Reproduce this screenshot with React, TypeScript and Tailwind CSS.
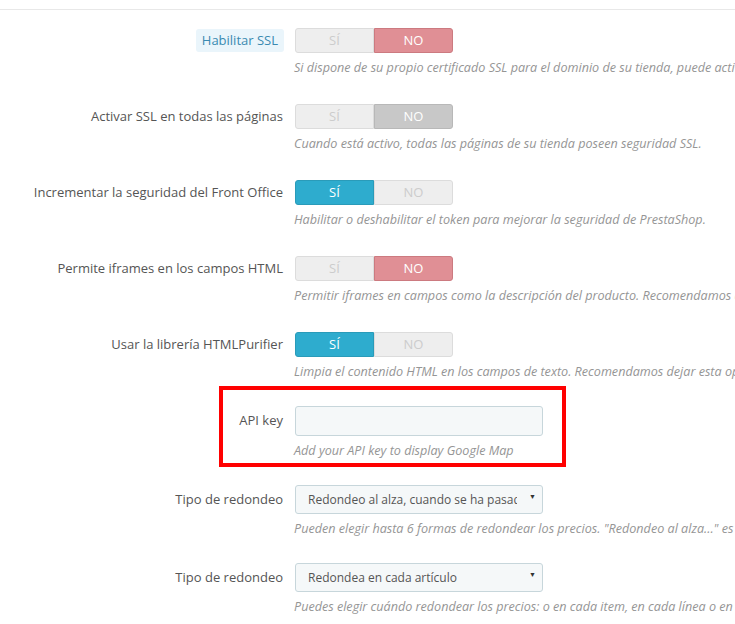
import type { ReactNode } from "react";

type SwitchState = "no" | "si" | "noGrey";

interface RowProps {
  label: ReactNode;
  help: string;
  children: ReactNode;
  className?: string;
  controlHeight: string;
}

function Row({ label, help, children, className = "", controlHeight }: RowProps) {
  return (
    <div className={`relative flex items-start ${className}`}>
      <div className={`w-[284px] shrink-0 flex items-center justify-end ${controlHeight}`}>{label}</div>
      <div className="ml-[11px] flex flex-col">
        {children}
        <p className="mt-[7px] -ml-[1px] whitespace-nowrap text-[12.6px] leading-[16px] italic text-[#959595]">{help}</p>
      </div>
    </div>
  );
}

function Switch({ value }: { value: SwitchState }) {
  const off = "bg-[#eeeeee] text-[#cccccc] border-[#dcdcdc]";
  let siCls = off;
  let noCls = off;
  if (value === "si") siCls = "bg-[#2eacce] text-white border-[#2a9bb9]";
  if (value === "no") noCls = "bg-[#e08f95] text-white border-[#cc7a80]";
  if (value === "noGrey") noCls = "bg-[#c8c8c8] text-white border-[#b8b8b8]";
  return (
    <div className="flex h-[25px] w-[158px]">
      <div className={`flex-1 flex items-center justify-center border rounded-l-[3px] text-[13px] ${siCls}`}>SÍ</div>
      <div className={`flex-1 flex items-center justify-center border rounded-r-[3px] text-[13px] ${noCls}`}>NO</div>
    </div>
  );
}

function Label({ children }: { children: ReactNode }) {
  return <span className="text-[13px] text-[#555555] pr-[1px]">{children}</span>;
}

function Select({ value }: { value: string }) {
  return (
    <div className="flex items-center h-[29px] w-[248px] bg-[#f5f8f9] border border-[#c7d6db] rounded-[3px] pl-[12px] pr-[3px]">
      <span className="flex-1 overflow-hidden whitespace-nowrap text-[12px] text-[#555555] mr-[12px]">{value}</span>
      <span className="text-[7px] text-[#333333] -mt-[5px] w-[10px]">▼</span>
    </div>
  );
}

export default function App() {
  return (
    <div className="w-[735px] h-[624px] overflow-hidden bg-white" style={{ fontFamily: '"Open Sans", "Liberation Sans", sans-serif' }}>
      <div className="mt-[9px] border-t border-[#e8e8e8]" />

      {/* ================= SWITCHES ================= */}
      <Row
        className="mt-[18px]"
        controlHeight="h-[25px]"
        label={<span className="text-[13px] text-[#3a8ab1] bg-[#eaf5fb] rounded-[3px] px-[6px] py-[2px]">Habilitar SSL</span>}
        help="Si dispone de su propio certificado SSL para el dominio de su tienda, puede activar el cifrado SSL (https://) para la verificación del cliente y el proceso de pedido."
      >
        <Switch value="no" />
      </Row>

      <Row
        className="mt-[28px]"
        controlHeight="h-[25px]"
        label={<Label>Activar SSL en todas las páginas</Label>}
        help="Cuando está activo, todas las páginas de su tienda poseen seguridad SSL."
      >
        <Switch value="noGrey" />
      </Row>

      <Row
        className="mt-[28px]"
        controlHeight="h-[25px]"
        label={<Label>Incrementar la seguridad del Front Office</Label>}
        help="Habilitar o deshabilitar el token para mejorar la seguridad de PrestaShop."
      >
        <Switch value="si" />
      </Row>

      <Row
        className="mt-[28px]"
        controlHeight="h-[25px]"
        label={<Label>Permite iframes en los campos HTML</Label>}
        help="Permitir iframes en campos como la descripción del producto. Recomendamos dejar esta opción deshabilitada."
      >
        <Switch value="no" />
      </Row>

      <Row
        className="mt-[28px]"
        controlHeight="h-[25px]"
        label={<Label>Usar la librería HTMLPurifier</Label>}
        help="Limpia el contenido HTML en los campos de texto. Recomendamos dejar esta opción activada."
      >
        <Switch value="si" />
      </Row>

      {/* ================= API KEY ================= */}
      <Row
        className="mt-[26px]"
        controlHeight="h-[30px]"
        label={<Label>API key</Label>}
        help="Add your API key to display Google Map"
      >
        <input
          type="text"
          className="h-[30px] w-[248px] bg-[#f5f8f9] border border-[#c7d6db] rounded-[3px] outline-none"
        />
        <div className="absolute left-[219px] top-[-20px] w-[347px] h-[81px] border-4 border-[#ff0000] pointer-events-none" />
      </Row>

      {/* ================= REDONDEO ================= */}
      <Row
        className="mt-[26px]"
        controlHeight="h-[29px]"
        label={<Label>Tipo de redondeo</Label>}
        help={'Pueden elegir hasta 6 formas de redondear los precios. "Redondeo al alza..." es el método predeterminado.'}
      >
        <Select value="Redondeo al alza, cuando se ha pasado la mitad" />
      </Row>

      <Row
        className="mt-[26px]"
        controlHeight="h-[29px]"
        label={<Label>Tipo de redondeo</Label>}
        help="Puedes elegir cuándo redondear los precios: o en cada item, en cada línea o en el total (de una factura, por ejemplo)."
      >
        <Select value="Redondea en cada artículo" />
      </Row>
    </div>
  );
}
